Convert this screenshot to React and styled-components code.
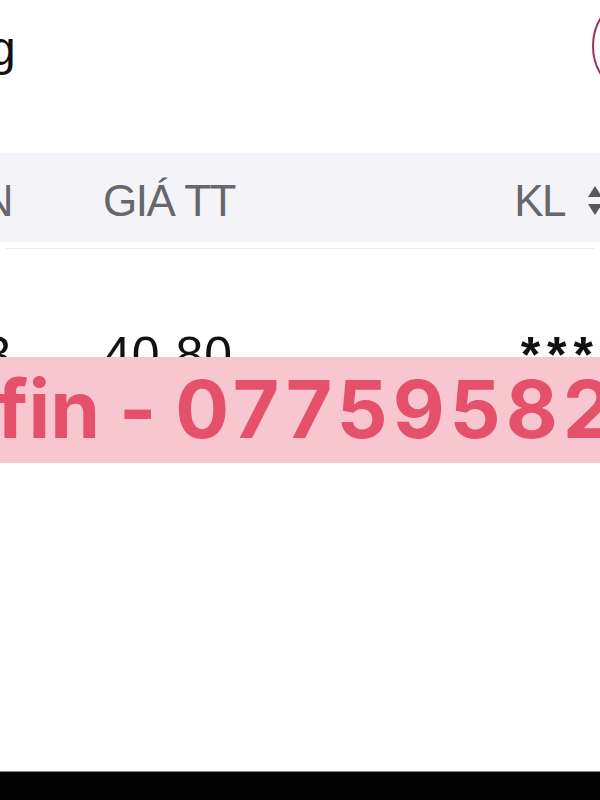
import React from "react";
import styled, { createGlobalStyle } from "styled-components";

const Global = createGlobalStyle`
  html, body { margin: 0; padding: 0; background: #ffffff; }
  body { width: 600px; height: 800px; overflow: hidden; font-family: "Liberation Sans", Arial, sans-serif; }
`;

const Page = styled.div`
  position: relative;
  width: 600px;
  height: 800px;
  overflow: hidden;
  display: flex;
  flex-direction: column;
  background: #fff;
`;

const TitleBar = styled.div`
  height: 153px;
  box-sizing: border-box;
  padding-top: 25px;
  display: flex;
  justify-content: space-between;
  align-items: flex-start;
`;

const Title = styled.div`
  font-size: 48px;
  line-height: 1;
  color: #111;
  margin-left: -11px;
`;

const RingButton = styled.div`
  width: 110px;
  height: 110px;
  box-sizing: border-box;
  border: 2.5px solid #9e3150;
  border-radius: 50%;
  margin-top: -34px;
  margin-right: -102px;
  flex-shrink: 0;
`;

const HeaderBand = styled.div`
  background: #f4f4f8;
  height: 95px;
  box-sizing: border-box;
  padding-top: 26px;
  border-bottom: 6px solid #fff;
  box-shadow: 0 7px 0 -6px #ececf0;
`;

const Grid = styled.div`
  display: grid;
  grid-template-columns: 12px 1fr auto;
  column-gap: 91px;
  align-items: start;
  margin-right: ${(p) => p.$right || 0}px;
`;

const Cell = styled.div`
  display: flex;
  justify-content: ${(p) => (p.$end ? "flex-end" : "flex-start")};
  align-items: center;
  white-space: nowrap;
  font-size: ${(p) => p.$size}px;
  line-height: 1;
  color: ${(p) => p.$color};
  letter-spacing: ${(p) => p.$ls || 0}px;
  font-weight: ${(p) => p.$weight || 400};
`;

const SortIcon = styled.svg`
  width: 16px;
  height: 30px;
  margin-left: 22px;
  display: block;
`;

const RowArea = styled.div`
  padding-top: 82px;
  flex: 1;
`;

const BottomBar = styled.div`
  height: 28px;
  background: #020202;
  border-top: 1px solid #8a8a8a;
`;

const Watermark = styled.div`
  position: absolute;
  left: 0;
  right: 0;
  top: 357px;
  height: 106px;
  background: #f8c6cf;
  display: flex;
  align-items: center;
  overflow: hidden;
`;

const WatermarkText = styled.div`
  font-family: Inter, "Liberation Sans", sans-serif;
  font-weight: 700;
  font-size: 80px;
  line-height: 1;
  color: #e5506b;
  white-space: nowrap;
  margin-left: -4px;
  margin-top: -3px;
`;

const Digits = styled.span`
  letter-spacing: 5px;
`;

export default function App() {
  return (
    <>
      <Global />
      <Page>
        <TitleBar>
          <Title>g</Title>
          <RingButton />
        </TitleBar>
        <HeaderBand>
          <Grid $right={-3}>
            <Cell $end $size={44} $color="#66666b" $ls={-1.5}>THỜI GIAN</Cell>
            <Cell $size={44} $color="#66666b" $ls={-1.5}>GIÁ TT</Cell>
            <Cell $size={44} $color="#66666b" $ls={-1.5}>
              KL
              <SortIcon viewBox="0 0 16 30">
                <path d="M8 0 L15 11 L1 11 Z" fill="#58585c" />
                <path d="M1 18 L15 18 L8 29 Z" fill="#58585c" />
              </SortIcon>
            </Cell>
          </Grid>
        </HeaderBand>
        <RowArea>
          <Grid $right={0}>
            <Cell $end $size={50} $color="#111" $ls={1}>14:29:03</Cell>
            <Cell $size={50} $color="#111" $ls={1}>40.80</Cell>
            <Cell $size={50} $color="#111" $ls={7} $weight={700}>***</Cell>
          </Grid>
        </RowArea>
        <BottomBar />
        <Watermark>
          <WatermarkText>
            fin - <Digits>0775958259</Digits>
          </WatermarkText>
        </Watermark>
      </Page>
    </>
  );
}
